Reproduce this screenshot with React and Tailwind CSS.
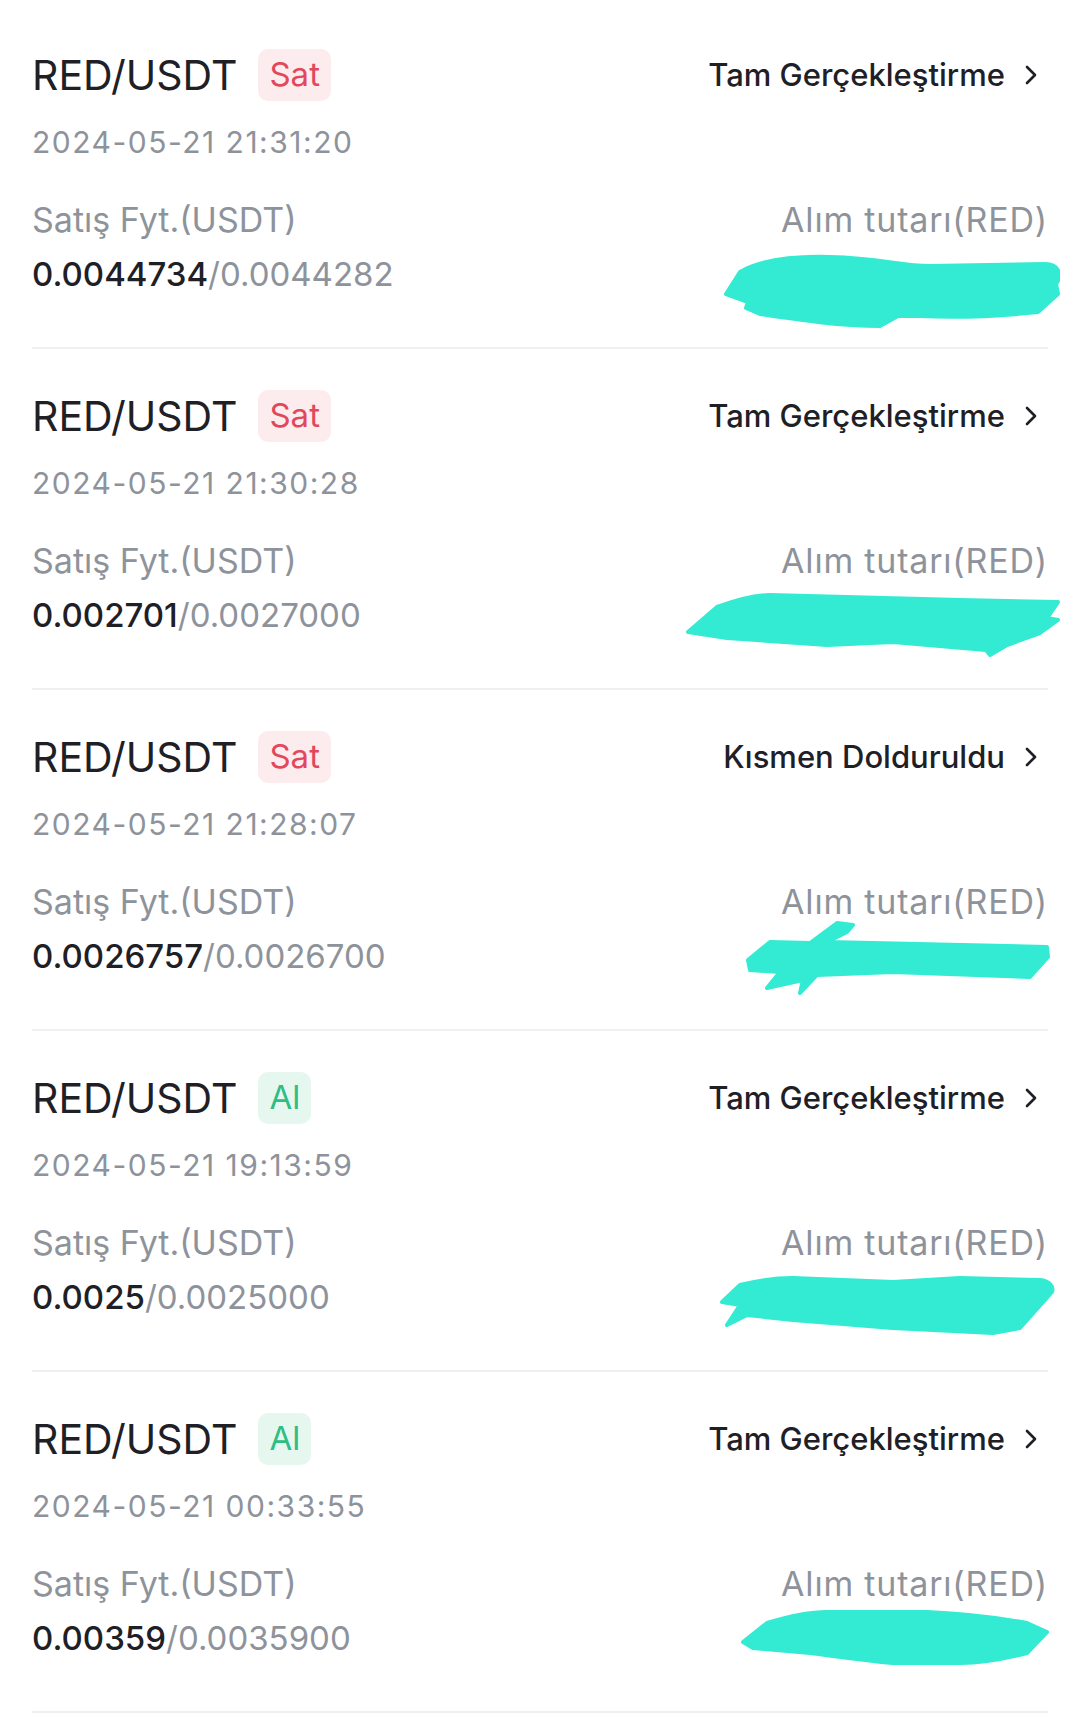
import React from 'react'

const FONT = { fontFamily: 'Inter, "Noto Sans", sans-serif' }

const orders = [
  {
    side: 'Sat',
    status: 'Tam Gerçekleştirme',
    date: '2024-05-21 21:31:20',
    avg: '0.0044734',
    price: '0.0044282',
    mark: { left: 720, top: 250, w: 340, h: 78, d: 'M20,22 C40,10 70,6 110,7 C160,8 180,16 210,16 L325,14 C340,14 342,26 336,34 L338,44 L318,62 C280,66 240,68 200,66 L178,66 L160,76 C120,76 80,70 40,64 L26,58 L28,52 L6,44 Z' },
  },
  {
    side: 'Sat',
    status: 'Tam Gerçekleştirme',
    date: '2024-05-21 21:30:28',
    avg: '0.002701',
    price: '0.0027000',
    mark: { left: 686, top: 243, w: 376, h: 68, d: 'M2,40 L31,15 C50,8 70,3 84,3 L274,8 L372,10 L361,26 L372,28 L354,41 L321,53 L304,63 L300,58 L207,50 L141,53 L41,46 Z' },
  },
  {
    side: 'Sat',
    status: 'Kısmen Dolduruldu',
    date: '2024-05-21 21:28:07',
    avg: '0.0026757',
    price: '0.0026700',
    mark: { left: 745, top: 230, w: 308, h: 76, d: 'M3,40 L25,22 L65,23 L92,3 L108,5 L102,12 L82,22 L302,27 L303,37 L285,57 L148,52 L72,55 L55,73 L58,60 L22,68 L35,52 L5,50 Z' },
  },
  {
    side: 'Al',
    status: 'Tam Gerçekleştirme',
    date: '2024-05-21 19:13:59',
    avg: '0.0025',
    price: '0.0025000',
    mark: { left: 720, top: 244, w: 336, h: 62, d: 'M2,27 L20,10 C40,5 55,3 73,3 L173,7 L240,3 L320,5 C330,6 334,12 332,17 L300,53 L273,58 L173,53 L73,45 L27,40 L7,50 L20,30 Z' },
  },
  {
    side: 'Al',
    status: 'Tam Gerçekleştirme',
    date: '2024-05-21 00:33:55',
    avg: '0.00359',
    price: '0.0035900',
    mark: { left: 740, top: 236, w: 312, h: 60, d: 'M3,34 L27,15 C50,8 70,4 87,4 L187,4 C230,6 260,10 287,15 L307,24 L287,45 C260,52 240,55 220,55 L153,55 C120,52 95,48 70,45 L13,40 Z' },
  },
]

// hand-drawn redaction over the amount
const Scribble = ({ mark }) => (
  <svg
    className="absolute pointer-events-none"
    style={{ left: mark.left, top: mark.top }}
    width={mark.w}
    height={mark.h}
    viewBox={`0 0 ${mark.w} ${mark.h}`}
  >
    <path d={mark.d} fill="#33ead3" stroke="#33ead3" strokeWidth="4" strokeLinejoin="round" />
  </svg>
)

const Chevron = () => (
  <svg width="14" height="22" viewBox="0 0 14 22" className="ml-[19px]">
    <path d="M3 3 L11 11 L3 19" fill="none" stroke="#1e2026" strokeWidth="2.6" strokeLinecap="round" strokeLinejoin="round" />
  </svg>
)

const OrderRow = ({ order, first }) => {
  const sell = order.side === 'Sat'
  return (
    <div className={`relative px-[32px] ${first ? 'pt-[49px]' : 'pt-[41px]'}`}>
      <div className="flex items-center justify-between h-[52px]">
        <div className="flex items-center">
          <span className="text-[41px] leading-[52px] text-[#1e2026]">RED/USDT</span>
          <span
            className={`ml-[21px] h-[52px] px-[11px] rounded-[10px] flex items-center text-[33px] ${
              sell ? 'bg-[#fdeced] text-[#e2485b]' : 'bg-[#e6f7f0] text-[#2ebd85]'
            }`}
          >
            {order.side}
          </span>
        </div>
        <div className="flex items-center pr-[10px] text-[31px] text-[#1e2026] font-medium">
          {order.status}
          <Chevron />
        </div>
      </div>

      <div className="mt-[21px] text-[30px] leading-[40px] tracking-[1.5px] text-[#8e939b]">{order.date}</div>

      <div className="mt-[36px] flex justify-between">
        <div>
          <div className="text-[34px] leading-[44px] text-[#8e939b]">Satış Fyt.(USDT)</div>
          <div className="mt-[10px] text-[33px] leading-[44px]">
            <span className="text-[#1e2026] font-medium">{order.avg}</span>
            <span className="text-[#8e939b]">/{order.price}</span>
          </div>
        </div>
        <div className="text-right">
          <div className="text-[34px] leading-[44px] tracking-[0.8px] text-[#8e939b]">Alım tutarı(RED)</div>
          <div className="mt-[10px] h-[44px]" />
        </div>
      </div>

      <div className="mt-[51px] h-[2px] bg-[#eff0f3]" />
      <Scribble mark={order.mark} />
    </div>
  )
}

export default function App() {
  return (
    <div className="w-[1080px] h-[1714px] bg-white overflow-hidden" style={FONT}>
      {orders.map((o, i) => (
        <OrderRow key={i} order={o} first={i === 0} />
      ))}
    </div>
  )
}
